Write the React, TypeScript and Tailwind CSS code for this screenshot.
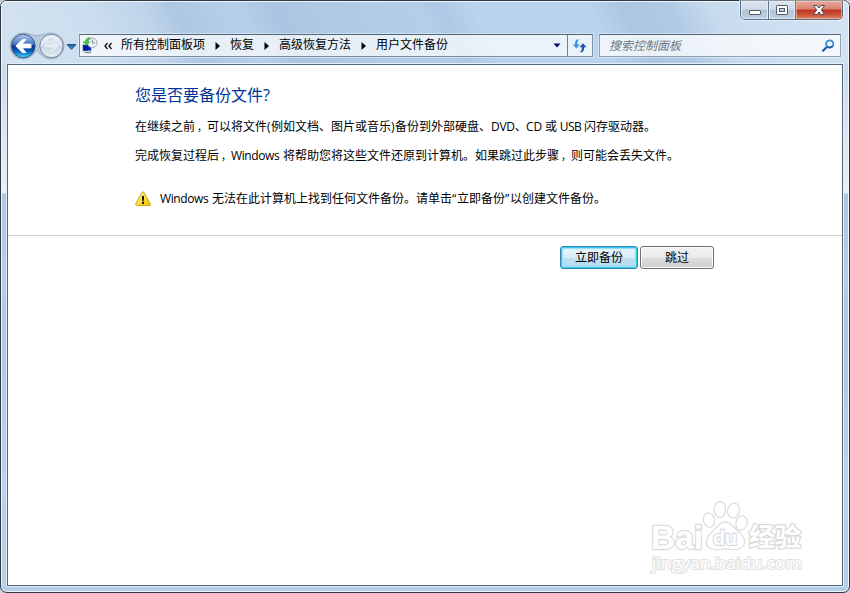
import type { ReactNode } from 'react';
import { clsx } from 'clsx';

const crumbs = [
  { name: '所有控制面板项', width: 'w-[84px]' },
  { name: '恢复', width: 'w-[24px]' },
  { name: '高级恢复方法', width: 'w-[72px]' },
  { name: '用户文件备份', width: 'w-[72px]' },
];

function BackForward() {
  return (
    <svg width="70" height="30" viewBox="8 31 70 30" className="shrink-0">
      <defs>
        <linearGradient id="back" x1="0" y1="0" x2="0" y2="1">
          <stop offset="0" stopColor="#b4cbee" />
          <stop offset="0.42" stopColor="#4876c6" />
          <stop offset="0.5" stopColor="#0b3390" />
          <stop offset="0.72" stopColor="#0a5cb8" />
          <stop offset="1" stopColor="#45dcfd" />
        </linearGradient>
        <linearGradient id="forward" x1="0" y1="0" x2="0" y2="1">
          <stop offset="0" stopColor="#edf2f8" />
          <stop offset="0.48" stopColor="#dbe4ed" />
          <stop offset="0.52" stopColor="#c9d6e3" />
          <stop offset="1" stopColor="#e4eef7" />
        </linearGradient>
        <linearGradient id="drop" x1="0" y1="0" x2="0" y2="1">
          <stop offset="0" stopColor="#1b4d90" />
          <stop offset="1" stopColor="#4dc1ee" />
        </linearGradient>
      </defs>
      <path
        d="M23 33C30 33 32 35.5 37 35.5S44 33 51 33A13 13 0 0 1 51 59C45 59 41 55 37 51C33 55 29 59 23 59A13 13 0 0 1 23 33Z"
        fill="#b8cadd"
        stroke="#9db2c8"
      />
      <circle cx="23.3" cy="46" r="11.8" fill="url(#back)" stroke="#36547f" />
      <path d="M15.8 46L22.3 39.5H26L22.2 44.1H31V47.9H22.2L26 52.5H22.3Z" fill="#fff" stroke="#fff" strokeWidth="0.9" />
      <circle cx="51.5" cy="46" r="11.7" fill="url(#forward)" stroke="#71869e" />
      <path d="M59 46L52.5 39.5H48.8L52.6 44.1H44V47.9H52.6L48.8 52.5H52.5Z" fill="#e3ebf2" stroke="#c3d0dd" strokeWidth="0.6" />
      <path d="M67 44.5H76L71.5 49.5Z" fill="url(#drop)" stroke="#1d4f87" strokeWidth="0.9" />
    </svg>
  );
}

function RecoveryIcon() {
  return (
    <svg width="16" height="17" viewBox="0 0 16 17" className="shrink-0">
      <rect x="0.5" y="7.5" width="9" height="6.5" fill="#0b27ba" stroke="#b8c8d4" />
      <path d="M4 8H6V13.5H1.5V11Z" fill="#051b86" />
      <path d="M2.5 15.5H9" stroke="#8795a0" strokeWidth="1.4" />
      <circle cx="10.3" cy="5.8" r="4.8" fill="#edf2f5" stroke="#a3adb4" />
      <path d="M10.3 2.5V6H13" stroke="#7b878f" fill="none" />
      <path d="M7.5 0.5C5 0.8 3.4 2.5 3.2 4.8H1L4.6 8.4L7.6 4.8H5.8C5.9 3.3 6.8 2.4 8 2Z" fill="#45c63b" stroke="#3ba33b" strokeWidth="0.5" />
    </svg>
  );
}

function Refresh() {
  return (
    <svg width="16" height="16" viewBox="0 0 16 16">
      <path d="M6 1.2C3.3 1.7 3 4 3 6.5H0.8L4.4 10.5L8 6.5H5.4C5.4 4.5 5.5 3 6.6 1.8Z" fill="#3499d8" />
      <path d="M8.8 14.6C11.8 13.9 12.2 11.8 12.2 9.3H14.6L11 5.3L7.4 9.3H9.9C9.9 11.4 9.6 12.9 8.2 14Z" fill="#2454aa" />
    </svg>
  );
}

function SearchIcon() {
  return (
    <svg width="14" height="14" viewBox="0 0 14 14">
      <path d="M5.8 8L2 11.8" stroke="#2858a5" strokeWidth="2.2" strokeLinecap="round" />
      <circle cx="8.7" cy="5" r="3.6" fill="#edf6fc" stroke="#348bd0" strokeWidth="1.8" />
      <path d="M5.9 7.4A3.7 3.7 0 0 0 11.6 7" stroke="#2858a5" strokeWidth="1.6" fill="none" />
    </svg>
  );
}

function WarningIcon() {
  return (
    <svg width="16" height="16" viewBox="0 0 16 16" className="shrink-0">
      <defs>
        <linearGradient id="warn" x1="0" y1="0" x2="1" y2="1">
          <stop offset="0" stopColor="#fff3a0" />
          <stop offset="0.5" stopColor="#ffe13a" />
          <stop offset="1" stopColor="#f2bd00" />
        </linearGradient>
      </defs>
      <path d="M7.2 1.2Q8 0.3 8.8 1.2L15.4 13.2Q15.6 14.4 14.5 14.5H1.5Q0.4 14.4 0.6 13.2Z" fill="url(#warn)" stroke="#cda11a" />
      <path d="M7 5H9V8L8.6 10.5H7.4L7 8Z" fill="#111" />
      <rect x="7" y="11" width="2" height="2" fill="#111" />
    </svg>
  );
}

function CaptionButtons() {
  return (
    <div className="mr-[6px] flex h-[19px] overflow-hidden rounded-b-[5px] border border-t-0 border-[#596b80] shadow-[0_0_0_1px_rgba(255,255,255,0.5)]">
      <div className="flex w-[27px] items-center justify-center bg-[linear-gradient(to_bottom,#dbe5f0_0%,#cfdbe8_45%,#b4c3d4_50%,#bccfe2_100%)] shadow-[inset_0_0_0_1px_#e3edf7]">
        <svg width="14" height="16" viewBox="0 0 14 16">
          <rect x="1.5" y="8.5" width="11" height="4" rx="0.6" fill="#fff" stroke="#515866" />
        </svg>
      </div>
      <div className="flex w-[28px] items-center justify-center border-x border-[#65768b] bg-[linear-gradient(to_bottom,#dbe5f0_0%,#cfdbe8_45%,#b4c3d4_50%,#bccfe2_100%)] shadow-[inset_0_0_0_1px_#e3edf7]">
        <svg width="14" height="16" viewBox="0 0 14 16">
          <rect x="1.5" y="3.5" width="11" height="9" rx="0.6" fill="#fff" stroke="#515866" />
          <rect x="4.5" y="6.5" width="5" height="3" fill="#bccddd" stroke="#515866" />
        </svg>
      </div>
      <div className="flex w-[46px] items-center justify-center bg-[linear-gradient(to_bottom,#e7aa9e_0%,#d7816d_45%,#bd3321_50%,#cb5137_75%,#dc8668_100%)] shadow-[inset_0_0_0_1px_rgba(255,205,185,0.55)]">
        <svg width="14" height="16" viewBox="0 0 14 16">
          <path
            d="M1.5 3.5H5L7 6L9 3.5H12.5L9.3 8L12.5 12.5H9L7 10L5 12.5H1.5L4.7 8Z"
            fill="#fff"
            stroke="#534b58"
          />
        </svg>
      </div>
    </div>
  );
}

function Latin({ children, className }: { children: ReactNode; className?: string }) {
  return <span className={clsx('inline-block whitespace-pre', className)}>{children}</span>;
}

function Comma() {
  return <span className="inline-block w-[12px] pl-[2px] text-[10px]">，</span>;
}

function Watermark() {
  return (
    <svg width="160" height="80" viewBox="648 498 160 80" className="absolute top-[497px] left-[647px]">
      <g fill="#fff" stroke="#dedede" strokeWidth="1.3">
        <ellipse cx="709" cy="520" rx="5.6" ry="7.2" transform="rotate(-10 709 520)" />
        <ellipse cx="720" cy="509.5" rx="5.7" ry="8" />
        <ellipse cx="733.5" cy="510.5" rx="5.8" ry="7.5" transform="rotate(12 733.5 510.5)" />
        <ellipse cx="741.5" cy="523" rx="5.6" ry="7.2" transform="rotate(15 741.5 523)" />
        <path d="M725 522C719 522 717 528 712 532C705 538 704 547 712 549C717 551 720 549 725 549S734 551 739 549C747 546 746 538 739 532C733 527 731 522 725 522Z" />
      </g>
      <g className="font-['Liberation_Sans','Noto_Sans_CJK_SC',sans-serif] font-bold" fill="#fff" stroke="#dbdbdb" strokeWidth="2.4" paintOrder="stroke">
        <text x="651" y="549" fontSize="34" textLength="52" lengthAdjust="spacingAndGlyphs">Bai</text>
        <text x="713" y="545" fontSize="21" textLength="24" lengthAdjust="spacingAndGlyphs">du</text>
        <text x="749" y="546" fontSize="25" textLength="52" lengthAdjust="spacingAndGlyphs">经验</text>
      </g>
      <text
        x="652"
        y="569"
        fontSize="16.5"
        textLength="150"
        lengthAdjust="spacingAndGlyphs"
        className="font-['Open_Sans',sans-serif]"
        fill="#fff"
        stroke="#e2e2e2"
        strokeWidth="2.2"
        paintOrder="stroke"
      >
        jingyan.baidu.com
      </text>
    </svg>
  );
}

export default function App() {
  return (
    <div className="h-[593px] w-[850px] overflow-hidden bg-[#c9ced4] font-['Open_Sans','Noto_Sans_CJK_SC',sans-serif] text-[12px] leading-4 text-black">
      <div className="relative flex h-full flex-col rounded-[7px] border border-[#303843] bg-[linear-gradient(to_bottom,#cbdef1_0px,#c9daed_64px,#e9f0f8_192px,#acc8e2_193px,#b2cee9_280px,#acc8e2_330px,#b6d2ec_480px,#b3cfe8_593px)] shadow-[inset_0_0_0_1px_#edf6fd]">
        {/* Glass frame header */}
        <div className="flex h-[63px] shrink-0 flex-col rounded-t-[6px] bg-[linear-gradient(63deg,#d3e2f1_2%,#cbddef_13%,#c0d5ea_19%,#adc7e2_23%,#b7d0ea_30%,#a9c5e1_34%,#adc9e4_39%,#b3cee9_51%,#acc8e4_53%,#b9d4ed_57%,#b9d3ed_70%,#abc6e1_74%,#b0cae4_79%,#c8dbee_84%,#d2e2f3_98%)] shadow-[inset_0_1px_0_#edf6fd,inset_1px_0_0_#edf6fd,inset_-1px_0_0_#edf6fd]">
          <div className="flex h-[30px] justify-end">
            <CaptionButtons />
          </div>
          <div className="flex h-[30px] items-start pl-[7px]">
            <BackForward />
            <div className="mt-[3px] ml-px flex h-[23px] w-[514px] border border-[#7d909f] border-t-[#566575] bg-white/70 shadow-[0_0_0_1px_rgba(235,246,255,0.5)]">
              <div className="flex w-[488px] items-center border-r border-[#71818e] pr-[6px] pl-[2px]">
                <RecoveryIcon />
                <svg width="10" height="8" viewBox="0 0 10 8" className="ml-[5px]">
                  <path d="M4.5 1L2 4L4.5 7M8.5 1L6 4L8.5 7" fill="none" stroke="#111" strokeWidth="1.3" />
                </svg>
                <div className="-mt-px ml-[8px] flex items-center">
                  {crumbs.map((crumb, index) => (
                    <div key={crumb.name} className="flex items-center">
                      {index > 0 && (
                        <svg width="25" height="8" viewBox="0 0 25 8" className="mt-px">
                          <path d="M10.5 0V8L15 4Z" fill="#000" />
                        </svg>
                      )}
                      <span className={clsx('whitespace-nowrap', crumb.width)}>{crumb.name}</span>
                    </div>
                  ))}
                </div>
                <svg width="8" height="5" viewBox="0 0 8 5" className="ml-auto">
                  <path d="M0.5 0.5H7.5L4 4.5Z" fill="#000c70" />
                </svg>
              </div>
              <div className="flex flex-1 items-center justify-center">
                <Refresh />
              </div>
            </div>
            <div className="mt-[3px] ml-[6px] flex h-[23px] w-[242px] items-center justify-between border border-[#8fa2b3] border-t-[#566575] bg-white/75 pr-[5px] pl-[9px] shadow-[0_0_0_1px_rgba(235,246,255,0.5)]">
              <span className="text-[#6d7680] italic">搜索控制面板</span>
              <SearchIcon />
            </div>
          </div>
        </div>

        {/* Page body */}
        <div className="mx-[6px] h-[522px] w-[836px] shrink-0 border border-[#53677a] bg-white shadow-[0_0_0_1px_#e2effa]">
          <div className="h-[171px] border-b border-[#cccccc] pl-[127px]">
            <h1 className="pt-[19px] text-[16px] leading-[22px] text-[#003399]">您是否要备份文件?</h1>
            <p className="mt-[13px] flex whitespace-pre">
              在继续之前<Comma />可以将文件<Latin className="w-[4px]">(</Latin>例如文档、图片或音乐<Latin className="w-[4px]">)</Latin>备份到外部硬盘、
              <Latin className="w-[35px] tracking-[-0.3px]">DVD、</Latin>
              <Latin className="w-[19px] tracking-[-0.2px]">CD </Latin>或<Latin className="w-[27px] tracking-[-0.5px]"> USB </Latin>闪存驱动器。
            </p>
            <p className="mt-[13px] flex whitespace-pre">
              完成恢复过程后<Comma /><Latin className="w-[52px] tracking-[-0.4px]">Windows </Latin>将帮助您将这些文件还原到计算机。如果跳过此步骤<Comma />则可能会丢失文件。
            </p>
            <div className="mt-[27px] flex items-center">
              <WarningIcon />
              <p className="ml-[9px] flex whitespace-pre">
                <Latin className="w-[52px] tracking-[-0.4px]">Windows </Latin>无法在此计算机上找到任何文件备份。请单击
                <Latin className="w-[5px]">“</Latin>立即备份<Latin className="w-[5px]">”</Latin>以创建文件备份。
              </p>
            </div>
          </div>
          <div className="flex gap-[2px] pt-[10px] pl-[552px]">
            <button className="h-[23px] w-[78px] rounded-[3px] border border-[#3c7fb1] bg-[linear-gradient(to_bottom,#eaf5fb_0%,#d9edf8_50%,#c2e1f2_51%,#b2d8ee_100%)] shadow-[inset_0_0_0_1px_#32cdf5,inset_0_0_1px_2px_#8fe0f8]">
              立即备份
            </button>
            <button className="h-[23px] w-[74px] rounded-[3px] border border-[#707070] bg-[linear-gradient(to_bottom,#f2f2f2_0%,#ebebeb_50%,#dddddd_51%,#cfcfcf_100%)] shadow-[inset_0_0_0_1px_#fafafa]">
              跳过
            </button>
          </div>
        </div>
        <Watermark />
      </div>
    </div>
  );
}
